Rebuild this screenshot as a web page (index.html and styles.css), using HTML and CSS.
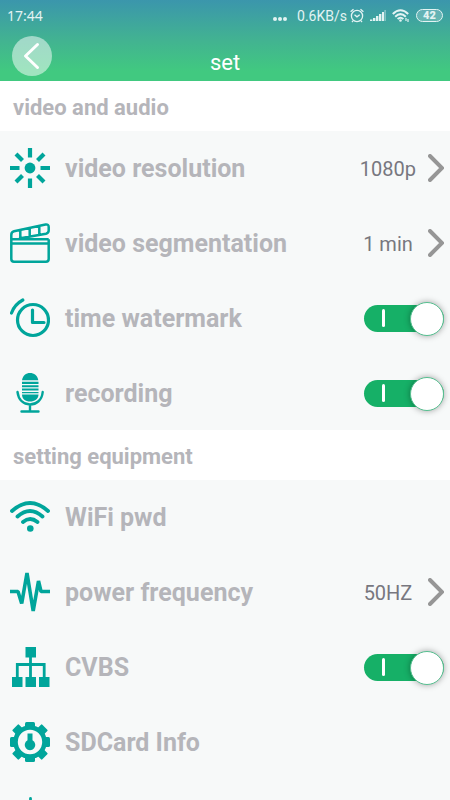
FILE: index.html
```
<!DOCTYPE html>
<html lang="en">
<head>
  <meta charset="UTF-8" />
  <meta name="viewport" content="width=device-width, initial-scale=1.0" />
  <title>set</title>
  <link rel="stylesheet" href="styles.css">
</head>
<body>
  <header>
    <div class="status-bar">
      <span class="clock">17:44</span>
      <div class="status-icons">
        <svg class="dots" width="14" height="16" viewBox="0 0 14 16" fill="currentColor"><circle cx="2" cy="11" r="2"/><circle cx="7" cy="11" r="2"/><circle cx="12" cy="11" r="2"/></svg>
        <span class="speed">0.6KB/s</span>
        <svg width="14" height="16" viewBox="0 0 14 16" fill="none" stroke="currentColor" stroke-width="1.3"><circle cx="7" cy="8" r="5.6"/><path d="M4.500 6.700L7 8.800L9.700 6.700M.6 3.700L3.500 1.200M13.400 3.700L10.500 1.200M3 12.800L2 14M11 12.800L12 14"/></svg>
        <svg width="16" height="16" viewBox="0 0 16 16" fill="currentColor"><path d="M0 11.500h2.400V13H0zM3 10h2.400v3H3zM6 8h2.400v5H6zM9 6h2.400v7H9zM12 4h2v9h-2z"/><path d="M14.300 2H16V13h-1.700z" opacity=".4"/></svg>
        <svg width="18" height="16" viewBox="0 0 18 16" fill="none" stroke="currentColor" stroke-width="2"><path d="M.8 6Q8.500 -1.500 16.200 6M3.200 8.700Q8.500 3.500 13.800 8.700M5.600 11Q8.500 8.500 11.400 11"/><circle cx="8.500" cy="12.500" r="1.300" fill="currentColor" stroke="none"/><path d="M14 10v3M16 11v3" stroke-width="1.200"/></svg>
        <span class="battery">42</span>
      </div>
    </div>
    <div class="title-bar">
      <button class="back-btn" aria-label="Back">
        <svg width="40" height="40" viewBox="0 0 40 40" fill="none" stroke="#fff" stroke-width="3" stroke-linecap="round" stroke-linejoin="round"><path d="M25.500 8.500L13.500 20L25.500 31.500"/></svg>
      </button>
      <h1>set</h1>
    </div>
  </header>

  <main>
    <section>
      <h2>video and audio</h2>
      <div class="rows">
        <button class="row">
          <svg class="icon" viewBox="0 0 40 40" fill="none" stroke="currentColor" stroke-width="4.200"><circle cx="20" cy="20" r="5.400" fill="currentColor" stroke="none"/><path d="M20 0v9.500M20 30.500V40M0 20h9.500M30.500 20H40M6 6L12.500 12.500M27.500 27.500L34 34M34 6L27.500 12.500M12.500 27.500L6 34"/></svg>
          <span class="name">video resolution</span>
          <span class="value">1080p</span>
          <svg class="arrow" viewBox="0 0 16 28"><path d="M2 2L14 14L2 26"/></svg>
        </button>
        <button class="row">
          <svg class="icon" viewBox="0 0 40 40" fill="none" stroke="currentColor" stroke-width="2.500" stroke-linejoin="round"><path d="M38.700 16.200H1.300V36Q1.300 38.700 4 38.700H36Q38.700 38.700 38.700 36V16.200M1.300 20.500H38.700"/><path d="M1.300 16V12Q1.300 9 4 8.300L35.500 1.500Q38.700 1 38.700 4V7.500Q38.700 10 36 10.700L9 15.500M10.300 7V14.500M19.700 5V13.200M29.300 3V11.600"/></svg>
          <span class="name">video segmentation</span>
          <span class="value">1 min</span>
          <svg class="arrow" viewBox="0 0 16 28"><path d="M2 2L14 14L2 26"/></svg>
        </button>
        <label class="row">
          <svg class="icon" viewBox="0 0 40 40" fill="none" stroke="currentColor" stroke-width="3.200" stroke-linecap="round" stroke-linejoin="round"><circle cx="23" cy="22" r="15.500"/><path d="M22.500 12V24.500H34M1.500 15Q4.500 6.500 12.800 2"/></svg>
          <span class="name">time watermark</span>
          <input type="checkbox" class="switch" checked />
        </label>
        <label class="row">
          <svg class="icon" viewBox="0 0 40 40" fill="currentColor"><path d="M12 7.200C13 2.500 16 0 20 0S27.500 2.500 28.300 7.200ZM12 8.700h16.500v2.200H12zM12 12.300h16.500v2H12zM12 15.600h16.500v2H12zM12 19h16.500v1.300H12zM12 21.500H28.500C28.500 26 24.500 28.500 20 28.500S12 26 12 21.500Z"/><path d="M7.500 19C8.500 27 13.500 31.500 20 31.500S32 27 32.700 19M20 32v6M11.500 38.500h17" fill="none" stroke="currentColor" stroke-width="2.400" stroke-linecap="round"/></svg>
          <span class="name">recording</span>
          <input type="checkbox" class="switch" checked />
        </label>
      </div>
    </section>

    <section>
      <h2>setting equipment</h2>
      <div class="rows">
        <button class="row">
          <svg class="icon" viewBox="0 0 40 40" fill="none" stroke="currentColor" stroke-width="3.800" stroke-linecap="round"><path d="M2 14Q20 -2 38 14M7.500 19.500Q20 8.500 32.500 19.500M13 25Q20 19 27.500 25"/><circle cx="20.300" cy="31.500" r="3.300" fill="currentColor" stroke="none"/></svg>
          <span class="name">WiFi pwd</span>
        </button>
        <button class="row">
          <svg class="icon" viewBox="0 0 40 40" fill="none" stroke="currentColor" stroke-width="3.600" stroke-linejoin="bevel"><path d="M0 19.500H8L11.700 31.500L17 1L23.200 39L28.500 9L31 19.500H40"/></svg>
          <span class="name">power frequency</span>
          <span class="value">50HZ</span>
          <svg class="arrow" viewBox="0 0 16 28"><path d="M2 2L14 14L2 26"/></svg>
        </button>
        <label class="row">
          <svg class="icon" viewBox="0 0 40 40" fill="currentColor"><path d="M15.500 0H26V10.500H15.500zM2 30H12.500V40H2zM15.500 30H26V40H15.500zM29 30H39.500V40H29z"/><path d="M20.500 10V30M7.300 30V17.500H34.200V30" fill="none" stroke="currentColor" stroke-width="2.800"/></svg>
          <span class="name">CVBS</span>
          <input type="checkbox" class="switch" checked />
        </label>
        <button class="row">
          <svg class="icon" viewBox="0 0 40 40" fill="currentColor"><circle cx="20" cy="20" r="14.500" fill="none" stroke="currentColor" stroke-width="4.600"/><rect x="15" y="0" width="10" height="7" rx="1.500"/><rect x="15" y="33" width="10" height="7" rx="1.500"/><rect x="0" y="15" width="7" height="10" rx="1.500"/><rect x="33" y="15" width="7" height="10" rx="1.500"/><g transform="rotate(45 20 20)"><rect x="15.500" y="-1" width="9" height="8" rx="1"/><rect x="15.500" y="33" width="9" height="8" rx="1"/><rect x="-1" y="15.500" width="8" height="9" rx="1"/><rect x="33" y="15.500" width="8" height="9" rx="1"/></g><path d="M17.500 11.500H22.500V18.300A5.300 5.300 0 1 1 17.500 18.300Z"/></svg>
          <span class="name">SDCard Info</span>
        </button>
        <button class="row" aria-label="More">
          <svg class="icon" viewBox="0 0 40 40" fill="none" stroke="currentColor" stroke-width="2.800" stroke-linecap="round"><path d="M20.500 1.500V38"/></svg>
        </button>
      </div>
    </section>
  </main>
</body>
</html>
```
FILE: styles.css
```
* { box-sizing: border-box; }
body { font-family: Roboto, sans-serif; margin: 0; height: 100vh; display: flex; flex-direction: column; overflow: hidden; background: #fff; }
button { font: inherit; background: none; border: none; padding: 0; cursor: pointer; }
svg { display: block; flex: none; }

header { flex: none; background: linear-gradient(#3b96ac, #42b391 50%, #41c980 88%); color: #fff; }
.status-bar { display: flex; justify-content: space-between; align-items: center; height: 31px; padding: 0 7px; color: #e3f3f3; }
.clock { font-family: "Noto Sans", sans-serif; font-size: 14px; }
.status-icons { display: flex; align-items: center; gap: 6px; }
.dots { margin-right: 4px; }
.speed { font-size: 14px; margin-right: -3px; }
.battery { width: 27px; height: 13px; border: 1px solid; border-radius: 7px; font-size: 11px; font-weight: 900; line-height: 11px; text-align: center; background: rgba(255, 255, 255, 0.2); }

.title-bar { display: grid; grid-template-columns: 40px 1fr 40px; height: 50px; padding: 5px 12px; }
.back-btn { width: 40px; height: 40px; border-radius: 50%; background: rgba(255, 255, 255, 0.5); }
h1 { margin: 0; padding-top: 13px; font-size: 22px; font-weight: 400; line-height: 28px; text-align: center; }

main { flex: 1; min-height: 0; overflow: hidden; }
h2 { margin: 0; padding: 3px 13px 0; font-size: 22px; font-weight: 700; line-height: 47px; color: #b5b5ba; }
.rows { display: grid; gap: 1px; background: #f7f9f9; }
.row { display: flex; align-items: center; width: 100%; height: 74px; padding: 0 6px 0 10px; text-align: left; cursor: pointer; }
.icon { width: 40px; height: 40px; color: #00a59b; }
.name { flex: 1; margin-left: 15px; padding-top: 1px; font-size: 25px; font-weight: 700; color: #b5b5ba; }
.value { min-width: 56px; margin-right: 12px; padding-top: 1px; font-size: 20px; text-align: center; color: #77777f; }
.arrow { width: 16px; height: 28px; fill: none; stroke: #969696; stroke-width: 4; stroke-linecap: round; }

.switch { appearance: none; position: relative; width: 80px; height: 27px; margin: 0; border-radius: 14px; background: #bbb; cursor: pointer; }
.switch:checked { background: #16b067; }
.switch::before { content: ""; position: absolute; left: 18px; top: 4px; width: 3px; height: 18px; border-radius: 2px; background: #fff; }
.switch::after { content: ""; position: absolute; right: 0; top: -3px; width: 32px; height: 32px; border: 1px solid #56bf90; border-radius: 50%; background: #fff; box-shadow: 0 0 6px rgba(0, 0, 0, 0.35); }
.switch:not(:checked)::after { right: auto; left: 0; border-color: #bbb; }
```
